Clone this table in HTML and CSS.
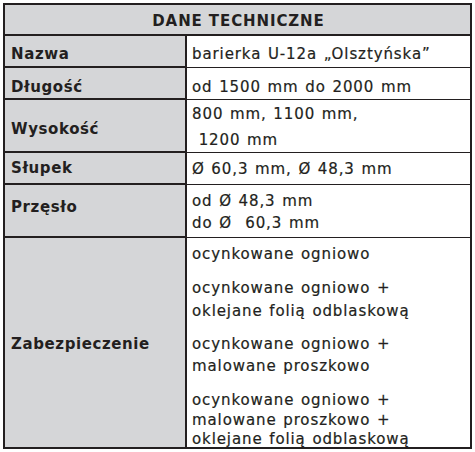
FILE: index.html
```html
<!DOCTYPE html>
<html lang="pl">
<head>
<meta charset="utf-8">
<title>Dane techniczne</title>
<link rel="stylesheet" href="styles.css">
</head>
<body>
<div class="spec">
  <div class="head">DANE TECHNICZNE</div>

  <div class="label row-nazwa">Nazwa</div>
  <div class="value row-nazwa"><p>barierka U-12a „Olsztyńska”</p></div>

  <div class="label row-dlugosc">Długość</div>
  <div class="value row-dlugosc"><p>od 1500 mm do 2000 mm</p></div>

  <div class="label row-wysokosc">Wysokość</div>
  <div class="value row-wysokosc"><p>800 mm, 1100 mm,<br>&nbsp;1200 mm</p></div>

  <div class="label row-slupek">Słupek</div>
  <div class="value row-slupek"><p>Ø 60,3 mm, Ø 48,3 mm</p></div>

  <div class="label row-przeslo">Przęsło</div>
  <div class="value row-przeslo"><p>od Ø 48,3 mm<br>do Ø&nbsp; 60,3 mm</p></div>

  <div class="label row-zab last">Zabezpieczenie</div>
  <div class="value row-zab last">
    <p class="p1">ocynkowane ogniowo</p>
    <p class="p2">ocynkowane ogniowo +<br>oklejane folią odblaskową</p>
    <p class="p3">ocynkowane ogniowo +<br>malowane proszkowo</p>
    <p class="p4">ocynkowane ogniowo +<br>malowane proszkowo +<br>oklejane folią odblaskową</p>
  </div>
</div>
</body>
</html>
```
FILE: styles.css
```css
html, body {
  margin: 0;
  padding: 0;
  background: #ffffff;
}

body {
  padding: 3px;
  font-family: "DejaVu Sans", "Liberation Sans", sans-serif;
  color: #231f20;
}

.spec {
  width: 465px;
  border: 2px solid #231f20;
  display: grid;
  grid-template-columns: 182px 283px;
  grid-template-rows: 31px 32px 32px 53px 32px 53px 209px;
}

.spec p {
  margin: 0;
}

.head {
  grid-column: 1 / 3;
  background: #d5d6d8;
  border-bottom: 2px solid #231f20;
  text-align: center;
  font-weight: bold;
  font-size: 15px;
  line-height: 18px;
  letter-spacing: 0.9px;
  padding-top: 7px;
  padding-left: 2px;
}

.label {
  background: #d5d6d8;
  border-right: 2px solid #231f20;
  border-bottom: 2px solid #231f20;
  font-weight: bold;
  font-size: 15px;
  line-height: 18px;
  letter-spacing: 0.6px;
  padding-left: 6px;
}

.value {
  border-bottom: 1px solid #231f20;
  font-size: 15px;
  line-height: 18px;
  letter-spacing: 0.9px;
  word-spacing: 1px;
  padding-left: 5px;
  -webkit-text-stroke: 0.2px #231f20;
}

.last {
  border-bottom: none;
}

.label.row-nazwa { padding-top: 9px; }
.value.row-nazwa { padding-top: 9px; }

.label.row-dlugosc { padding-top: 10px; }
.value.row-dlugosc { padding-top: 10px; }

.label.row-wysokosc { padding-top: 20px; }
.value.row-wysokosc { padding-top: 1px; line-height: 26px; }

.label.row-slupek { padding-top: 6px; }
.value.row-slupek { padding-top: 7px; }

.label.row-przeslo { padding-top: 13px; }
.value.row-przeslo { padding-top: 6px; line-height: 21.5px; }

.label.row-zab { padding-top: 97px; }
.value.row-zab { padding-top: 5px; }

.value .p1 { line-height: 22px; }
.value .p2 { line-height: 23px; margin-top: 12px; }
.value .p3 { line-height: 21.5px; margin-top: 11px; }
.value .p4 { line-height: 19.5px; margin-top: 14px; }
```
